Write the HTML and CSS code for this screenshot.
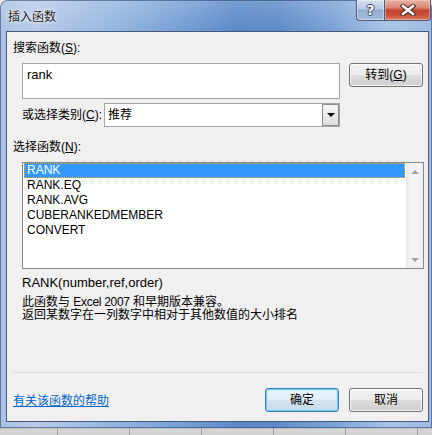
FILE: index.html
```html
<!DOCTYPE html>
<html lang="zh-CN">
<head>
<meta charset="utf-8">
<title>插入函数</title>
<link rel="stylesheet" href="styles.css">
</head>
<body>
<div class="window">
  <div class="titlebar">
    <div class="title">插入函数</div>
    <div class="caption">
      <div class="cap-btn help"><span>?</span></div>
      <div class="cap-btn close">
        <svg width="16" height="12" viewBox="0 0 16 12">
          <path d="M3 2 L13 10 M13 2 L3 10" stroke="#3a2a28" stroke-width="4.6" stroke-linecap="square" fill="none"/>
          <path d="M3 2 L13 10 M13 2 L3 10" stroke="#ffffff" stroke-width="2.6" stroke-linecap="square" fill="none"/>
        </svg>
      </div>
    </div>
  </div>
  <div class="content">
    <div class="label">搜索函数(<u>S</u>):</div>
    <div class="search-row">
      <div class="textbox">rank</div>
      <div class="btn">转到(<u>G</u>)</div>
    </div>
    <div class="cat-row">
      <div class="cat-label">或选择类别(<u>C</u>):</div>
      <div class="combo">
        <span class="combo-text">推荐</span>
        <span class="combo-btn"><span class="tri-down"></span></span>
      </div>
    </div>
    <div class="label label2">选择函数(<u>N</u>):</div>
    <div class="listbox">
      <div class="list">
        <div class="row selected">RANK</div>
        <div class="row">RANK.EQ</div>
        <div class="row">RANK.AVG</div>
        <div class="row">CUBERANKEDMEMBER</div>
        <div class="row">CONVERT</div>
      </div>
      <div class="scrollbar">
        <span class="arrow up"></span>
        <span class="arrow down"></span>
      </div>
    </div>
    <div class="syntax">RANK(number,ref,order)</div>
    <div class="desc">
      <div>此函数与 <span class="latin">Excel 2007</span> 和早期版本兼容。</div>
      <div>返回某数字在一列数字中相对于其他数值的大小排名</div>
    </div>
    <div class="sep"></div>
    <div class="bottom-row">
      <a class="help-link">有关该函数的帮助</a>
      <div class="btn ok">确定</div>
      <div class="btn cancel">取消</div>
    </div>
  </div>
</div>
<div class="sheet">
  <div class="cell first"></div>
  <div class="cell"></div>
  <div class="cell"></div>
  <div class="cell"></div>
  <div class="cell"></div>
  <div class="cell"></div>
</div>
</body>
</html>
```

FILE: styles.css
```css
* { box-sizing: border-box; }
html, body { margin: 0; padding: 0; }
body {
  width: 432px;
  height: 435px;
  overflow: hidden;
  background: #eef0f2;
  font-family: "Liberation Sans", "Noto Sans CJK SC", sans-serif;
  font-size: 12px;
  color: #000;
}
u { text-decoration: underline; text-underline-offset: 1px; }

.window {
  width: 432px;
  height: 428px;
  border-radius: 7px 7px 0 0;
  padding: 0 3px 6px 6px;
  display: flex;
  flex-direction: column;
  background:
    linear-gradient(to bottom, rgba(255,255,255,0.18), rgba(255,255,255,0) 30px),
    linear-gradient(to right, #a9c2e3 0%, #b7cbe8 8%, #9dbbe2 22%, #7ea5d8 38%, #5b89c8 55%, #5e8bc8 64%, #7ea4d7 78%, #a9c3e6 90%, #9fbbe2 100%);
  box-shadow: inset 0 0 0 1px rgba(40,60,100,0.55);
}

.titlebar {
  height: 31px;
  display: flex;
  align-items: flex-start;
  flex: none;
}
.title {
  margin: 10px 0 0 2px;
  line-height: 14px;
  color: #1a1a1a;
  text-shadow: 0 0 5px rgba(255,255,255,0.95), 0 0 3px rgba(255,255,255,0.9);
}
.caption {
  margin-left: auto;
  margin-right: -2px;
  display: flex;
}
.cap-btn {
  height: 21px;
  display: flex;
  align-items: center;
  justify-content: center;
  border: 1px solid #4a5a78;
  border-top: none;
}
.help {
  width: 28px;
  border-right: none;
  border-radius: 0 0 0 4px;
  background: linear-gradient(to bottom, #d3dfee 0%, #b7c9e2 45%, #93acd0 50%, #a3bcdd 100%);
  box-shadow: inset 0 0 0 1px rgba(255,255,255,0.45);
}
.help span {
  font-family: "DejaVu Sans", sans-serif;
  font-weight: bold;
  font-size: 14px;
  line-height: 14px;
  color: #fff;
  text-shadow: 1px 0 0 #3b4256, -1px 0 0 #3b4256, 0 1px 0 #3b4256, 0 -1px 0 #3b4256;
}
.close {
  width: 47px;
  border-radius: 0 0 4px 0;
  background: linear-gradient(to bottom, #e9b1a4 0%, #d98470 40%, #c4432d 50%, #cb4f37 75%, #dd7a60 100%);
  box-shadow: inset 0 0 0 1px rgba(255,220,210,0.45);
}
.close svg { display: block; }

.content {
  flex: 1;
  background: #f0f0f0;
  border: 1px solid #44587a;
  padding: 9px 5px 0 6px;
  display: flex;
  flex-direction: column;
  align-items: flex-start;
}
.label { line-height: 14px; height: 14px; }
.label2 { margin-top: 13px; }

.search-row {
  margin-top: 8px;
  margin-left: 9px;
  display: flex;
  align-items: flex-start;
}
.textbox {
  width: 318px;
  height: 36px;
  background: #fff;
  border: 1px solid #a5a5a5;
  padding: 3px 4px;
  font-size: 13px;
  line-height: 15px;
}
.btn {
  width: 74px;
  height: 24px;
  border: 1px solid #707070;
  border-radius: 3px;
  background: linear-gradient(to bottom, #f3f3f3 0%, #ebebeb 48%, #dcdcdc 52%, #cfcfcf 100%);
  box-shadow: inset 0 0 0 1px rgba(255,255,255,0.75);
  display: flex;
  align-items: center;
  justify-content: center;
  line-height: 14px;
}
.search-row .btn { margin-left: 9px; }

.cat-row {
  margin-top: 4px;
  margin-left: 9px;
  height: 24px;
  display: flex;
  align-items: center;
}
.cat-label { width: 82px; line-height: 14px; }
.combo {
  width: 236px;
  height: 24px;
  background: #fff;
  border: 1px solid #a5a5a5;
  display: flex;
  align-items: center;
  padding: 0 1px 0 3px;
}
.combo-text { flex: 1; line-height: 14px; }
.combo-btn {
  width: 17px;
  height: 22px;
  border: 1px solid #8a8a8a;
  background: linear-gradient(to bottom, #f6f6f6, #dedede);
  display: flex;
  align-items: center;
  justify-content: center;
  margin-right: -1px;
}
.tri-down {
  width: 0; height: 0;
  border-left: 4px solid transparent;
  border-right: 4px solid transparent;
  border-top: 4px solid #000;
}

.listbox {
  margin-top: 8px;
  margin-left: 9px;
  width: 402px;
  height: 107px;
  background: #fff;
  border: 1px solid #828790;
  display: flex;
  flex: none;
}
.list {
  flex: 1;
  padding: 0 1px;
}
.row {
  height: 15px;
  line-height: 15px;
  padding-left: 3px;
  white-space: nowrap;
  color: #000;
}
.row.selected {
  background: #3399ff;
  color: #fff;
  border: 1px dotted #f7a23b;
  padding-left: 2px;
  line-height: 13px;
}
.scrollbar {
  width: 17px;
  background: linear-gradient(to right, #e9e9e9, #f3f3f3 30%, #f0f0f0);
  display: flex;
  flex-direction: column;
  align-items: center;
  justify-content: space-between;
  padding: 7px 0 6px;
}
.arrow {
  width: 0; height: 0;
  border-left: 4px solid transparent;
  border-right: 4px solid transparent;
}
.arrow.up { border-bottom: 4px solid #a3a3a3; }
.arrow.down { border-top: 4px solid #a3a3a3; }

.syntax {
  margin-top: 7px;
  margin-left: 9px;
  font-size: 13px;
  line-height: 14px;
}
.desc {
  margin-top: 6px;
  margin-left: 9px;
  line-height: 13px;
}
.latin { letter-spacing: -0.3px; }
.sep {
  margin-top: 50px;
  width: 410px;
  height: 1px;
  background: #d5dfe5;
  flex: none;
}
.bottom-row {
  margin-top: 15px;
  width: 410px;
  height: 24px;
  display: flex;
  align-items: center;
}
.help-link {
  color: #0066cc;
  text-decoration: underline;
  line-height: 14px;
  margin-right: auto;
  margin-top: 2px;
}
.btn.ok {
  border-color: #3c7fb1;
  box-shadow: inset 0 0 0 1px #6dd0f7, inset 0 0 0 2px rgba(180,230,250,0.6);
  background: linear-gradient(to bottom, #eaf6fd 0%, #e0eef8 48%, #d5e5f1 52%, #c6dbea 100%);
  margin-right: 10px;
}

.sheet {
  height: 7px;
  display: flex;
  background: linear-gradient(to bottom, #bdbdbd 0, #d8d8d8 2px, #d2d2d2 100%);
}
.cell {
  width: 72px;
  height: 7px;
  border-right: 1px solid #9d9d9d;
  flex: none;
}
.cell.first { width: 58px; }
```
